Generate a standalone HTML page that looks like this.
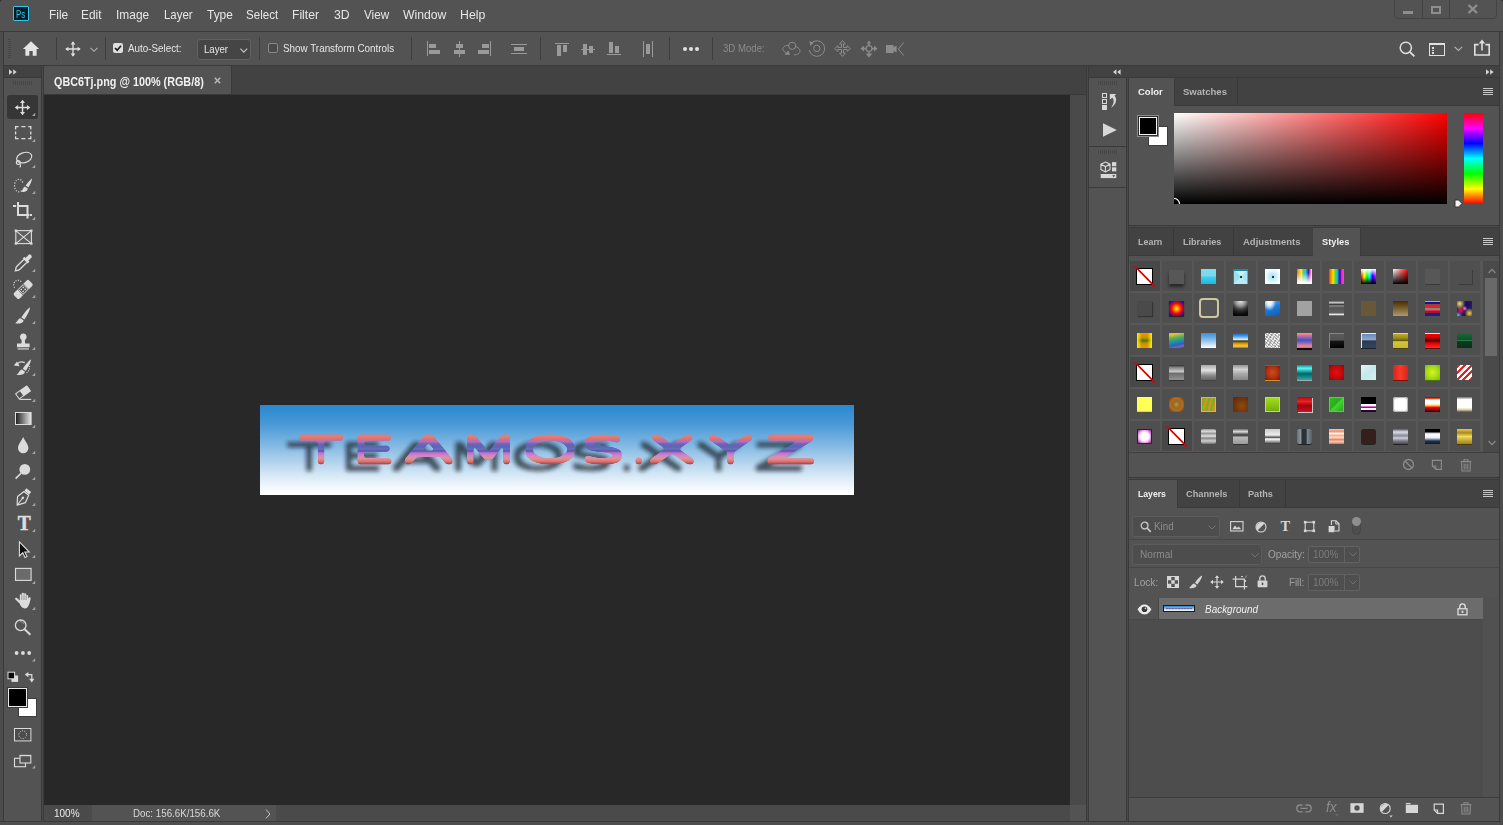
<!DOCTYPE html>
<html lang="en">
<head>
<meta charset="utf-8">
<title>QBC6Tj.png @ 100% (RGB/8)</title>
<style>
*{box-sizing:border-box;margin:0;padding:0}
html,body{width:1503px;height:825px;overflow:hidden;background:#535353}
body{position:relative;font-family:"Liberation Sans",sans-serif;font-size:11px;color:#dcdcdc;-webkit-font-smoothing:antialiased}
.abs,.abs *{position:absolute}
.abs{position:absolute}
.r{position:absolute}
.t{position:absolute;white-space:nowrap;line-height:1}
svg{position:absolute;overflow:visible}
/* === structural === */
#menubar{left:0;top:0;width:1503px;height:31px;background:#535353}
#optbar{left:4px;top:32px;width:1499px;height:33px;background:#535353}
/*SKELETON_CSS*/
</style>
</head>
<body>
<!-- ===== STRUCTURE BACKGROUNDS ===== -->
<div class="r" style="left:0;top:32px;width:4px;height:793px;background:#4c4c4c"></div>
<div class="r" style="left:0;top:31px;width:1503px;height:1px;background:#3a3a3a"></div>
<div class="r" style="left:3px;top:32px;width:1px;height:790px;background:#3a3a3a"></div>
<div class="r" style="left:4px;top:65px;width:1499px;height:1px;background:#3a3a3a"></div>
<div class="r" style="left:0;top:821px;width:1503px;height:1px;background:#3a3a3a"></div>
<div class="r" style="left:0;top:822px;width:1503px;height:3px;background:#4f4f4f"></div>

<!-- tools panel -->
<div class="r" id="toolhdr" style="left:4px;top:66px;width:37px;height:11px;background:#424242"></div>
<div class="r" style="left:4px;top:77px;width:37px;height:1px;background:#3a3a3a"></div>
<div class="r" style="left:41px;top:66px;width:3px;height:756px;background:linear-gradient(to right,#3a3a3a 0 1px,#484848 1px 2px,#3a3a3a 2px 3px)"></div>

<!-- document tab strip -->
<div class="r" style="left:44px;top:66px;width:1042px;height:29px;background:#424242"></div>
<div class="r" style="left:44px;top:66px;width:187px;height:29px;background:#535353"></div>
<div class="r" style="left:231px;top:66px;width:1px;height:28px;background:#3a3a3a"></div>
<div class="r" style="left:44px;top:94px;width:1042px;height:1px;background:#383838"></div>
<!-- canvas -->
<div class="r" id="canvas" style="left:44px;top:95px;width:1026px;height:710px;background:#282828"></div>
<div class="r" style="left:1070px;top:95px;width:16px;height:710px;background:#4a4a4a"></div>
<div class="r" style="left:44px;top:805px;width:1026px;height:16px;background:#4a4a4a"></div>
<div class="r" style="left:1086px;top:66px;width:3px;height:756px;background:linear-gradient(to right,#3a3a3a 0 1px,#484848 1px 2px,#3a3a3a 2px 3px)"></div>

<!-- right dock -->
<div class="r" style="left:1089px;top:66px;width:414px;height:11px;background:#424242"></div>
<div class="r" style="left:1089px;top:77px;width:414px;height:1px;background:#3a3a3a"></div>
<div class="r" style="left:1126px;top:78px;width:3px;height:744px;background:linear-gradient(to right,#3a3a3a 0 1px,#484848 1px 2px,#3a3a3a 2px 3px)"></div>
<!-- TOPBARS -->
<div class="r" style="left:13px;top:6px;width:16px;height:15px;background:#001d26;border:1px solid #31c5f0;border-radius:1px"></div>
<span class="t" style="left:16.28px;top:9px;font-size:11px;line-height:11px;color:#31c5f0;transform:scaleX(0.7167);transform-origin:0 0;">Ps</span>
<span class="t" style="left:48.55px;top:9px;font-size:12.6px;line-height:12.6px;color:#e6e6e6;transform:scaleX(0.9474);transform-origin:0 0;">File</span>
<span class="t" style="left:81.26px;top:9px;font-size:12.6px;line-height:12.6px;color:#e6e6e6;transform:scaleX(0.9429);transform-origin:0 0;">Edit</span>
<span class="t" style="left:116.25px;top:9px;font-size:12.6px;line-height:12.6px;color:#e6e6e6;transform:scaleX(0.9471);transform-origin:0 0;">Image</span>
<span class="t" style="left:163.59px;top:9px;font-size:12.6px;line-height:12.6px;color:#e6e6e6;transform:scaleX(0.9097);transform-origin:0 0;">Layer</span>
<span class="t" style="left:206.80px;top:9px;font-size:12.6px;line-height:12.6px;color:#e6e6e6;transform:scaleX(0.9481);transform-origin:0 0;">Type</span>
<span class="t" style="left:246.28px;top:9px;font-size:12.6px;line-height:12.6px;color:#e6e6e6;transform:scaleX(0.9176);transform-origin:0 0;">Select</span>
<span class="t" style="left:292.44px;top:9px;font-size:12.6px;line-height:12.6px;color:#e6e6e6;transform:scaleX(0.9630);transform-origin:0 0;">Filter</span>
<span class="t" style="left:333.80px;top:9px;font-size:12.6px;line-height:12.6px;color:#e6e6e6;transform:scaleX(0.9750);transform-origin:0 0;">3D</span>
<span class="t" style="left:364.00px;top:9px;font-size:12.6px;line-height:12.6px;color:#e6e6e6;transform:scaleX(0.9259);transform-origin:0 0;">View</span>
<span class="t" style="left:403.20px;top:9px;font-size:12.6px;line-height:12.6px;color:#e6e6e6;transform:scaleX(0.9689);transform-origin:0 0;">Window</span>
<span class="t" style="left:460.42px;top:9px;font-size:12.6px;line-height:12.6px;color:#e6e6e6;transform:scaleX(0.9760);transform-origin:0 0;">Help</span>
<div class="r" style="left:1394px;top:-2px;width:103px;height:21px;border:1px solid #434343;border-radius:0 0 4px 4px"></div>
<div class="r" style="left:1422px;top:0px;width:1px;height:18px;background:#434343;"></div>
<div class="r" style="left:1449px;top:0px;width:1px;height:18px;background:#434343;"></div>
<div class="r" style="left:1403px;top:11px;width:10px;height:3px;background:#8e8e8e;"></div>
<div class="r" style="left:1431px;top:6px;width:10px;height:8px;border:2px solid #8e8e8e"></div>
<svg style="left:1467px;top:4px" width="12" height="10" viewBox="0 0 12 10"><path d="M1.5 1 L10 9 M10 1 L1.5 9" stroke="#8e8e8e" stroke-width="2.4" fill="none"/></svg>
<svg style="left:0;top:0" width="1503" height="6" viewBox="0 0 1503 6"><path d="M0 0H3.2A3.2 3.2 0 0 0 0 3.2Z" fill="#2a2a2a"/><path d="M1503 0H1499.8A3.2 3.2 0 0 1 1503 3.2Z" fill="#2a2a2a"/></svg>
<div class="r" style="left:8px;top:39px;width:3px;height:20px;background:repeating-linear-gradient(to bottom,#464646 0 1px,transparent 1px 2px)"></div>
<svg style="left:22px;top:40px" width="18" height="17" viewBox="0 0 18 17"><path d="M9 1.3 L0.9 9 H3.4 V15.8 H7.3 V11 H10.7 V15.8 H14.6 V9 H17.1 Z" fill="#e4e4e4"/></svg>
<div class="r" style="left:56px;top:37px;width:1px;height:23px;background:#3e3e3e;"></div>
<div class="r" style="left:105px;top:37px;width:1px;height:23px;background:#3e3e3e;"></div>
<div class="r" style="left:259px;top:37px;width:1px;height:23px;background:#3e3e3e;"></div>
<div class="r" style="left:411px;top:37px;width:1px;height:23px;background:#3e3e3e;"></div>
<div class="r" style="left:540px;top:37px;width:1px;height:23px;background:#3e3e3e;"></div>
<div class="r" style="left:669px;top:37px;width:1px;height:23px;background:#3e3e3e;"></div>
<div class="r" style="left:712px;top:37px;width:1px;height:23px;background:#3e3e3e;"></div>
<svg style="left:64.5px;top:40.5px" width="16" height="16" viewBox="0 0 17 17"><path d="M8.5 1.6V15.4M1.6 8.5H15.4" stroke="#e0e0e0" stroke-width="1.4" fill="none"/><path d="M8.5 0.2L11 3.6H6ZM8.5 16.8L11 13.4H6ZM0.2 8.5L3.6 6V11ZM16.8 8.5L13.4 6V11Z" fill="#e0e0e0"/></svg>
<svg style="left:90px;top:47px" width="8" height="6" viewBox="0 0 8 6"><path d="M0.5 0.8L4 4.3L7.5 0.8" stroke="#b0b0b0" stroke-width="1.1" fill="none"/></svg>
<div class="r" style="left:113px;top:43px;width:10px;height:10px;background:#dedede;border-radius:2px"></div>
<svg style="left:113px;top:43px" width="10" height="10" viewBox="0 0 10 10"><path d="M2 5L4.2 7.2L8 2.8" stroke="#1e1e1e" stroke-width="1.7" fill="none"/></svg>
<span class="t" style="left:128.20px;top:44px;font-size:10.4px;line-height:10.4px;color:#e6e6e6;transform:scaleX(0.9464);transform-origin:0 0;">Auto-Select:</span>
<div class="r" style="left:197px;top:39px;width:54px;height:21px;background:#454545;border:1px solid #626262;border-radius:3px"></div>
<span class="t" style="left:204.29px;top:44px;font-size:10.6px;line-height:10.6px;color:#e8e8e8;transform:scaleX(0.9077);transform-origin:0 0;">Layer</span>
<svg style="left:240px;top:48px" width="8" height="6" viewBox="0 0 8 6"><path d="M0.4 0.6L3.8 4.1L7.2 0.6" stroke="#c8c8c8" stroke-width="1.1" fill="none"/></svg>
<div class="r" style="left:268px;top:43px;width:10px;height:10px;background:#4a4a4a;border:1px solid #8a8a8a;border-radius:2px"></div>
<span class="t" style="left:283.20px;top:44px;font-size:10.4px;line-height:10.4px;color:#e6e6e6;transform:scaleX(0.9487);transform-origin:0 0;">Show Transform Controls</span>
<div class="r" style="left:427px;top:41px;width:1px;height:15px;background:#9a9a9a;"></div>
<div class="r" style="left:429px;top:44px;width:7px;height:4px;background:#9a9a9a;"></div>
<div class="r" style="left:429px;top:50px;width:11px;height:4px;background:#9a9a9a;"></div>
<div class="r" style="left:459px;top:41px;width:1px;height:16px;background:#9a9a9a;"></div>
<div class="r" style="left:456px;top:44px;width:7px;height:4px;background:#9a9a9a;"></div>
<div class="r" style="left:454px;top:50px;width:11px;height:4px;background:#9a9a9a;"></div>
<div class="r" style="left:490px;top:41px;width:1px;height:15px;background:#9a9a9a;"></div>
<div class="r" style="left:482px;top:44px;width:7px;height:4px;background:#9a9a9a;"></div>
<div class="r" style="left:478px;top:50px;width:11px;height:4px;background:#9a9a9a;"></div>
<div class="r" style="left:511px;top:44px;width:16px;height:1px;background:#9a9a9a;"></div>
<div class="r" style="left:511px;top:53px;width:16px;height:1px;background:#9a9a9a;"></div>
<div class="r" style="left:514px;top:47px;width:10px;height:4px;background:#9a9a9a;"></div>
<div class="r" style="left:555px;top:43px;width:14px;height:1px;background:#9a9a9a;"></div>
<div class="r" style="left:557px;top:45px;width:4px;height:11px;background:#9a9a9a;"></div>
<div class="r" style="left:563px;top:45px;width:4px;height:7px;background:#9a9a9a;"></div>
<div class="r" style="left:581px;top:49px;width:14px;height:1px;background:#9a9a9a;"></div>
<div class="r" style="left:583px;top:44px;width:4px;height:11px;background:#9a9a9a;"></div>
<div class="r" style="left:589px;top:46px;width:4px;height:7px;background:#9a9a9a;"></div>
<div class="r" style="left:607px;top:54px;width:14px;height:1px;background:#9a9a9a;"></div>
<div class="r" style="left:609px;top:42px;width:4px;height:11px;background:#9a9a9a;"></div>
<div class="r" style="left:615px;top:46px;width:4px;height:7px;background:#9a9a9a;"></div>
<div class="r" style="left:643px;top:41px;width:1px;height:16px;background:#9a9a9a;"></div>
<div class="r" style="left:652px;top:41px;width:1px;height:16px;background:#9a9a9a;"></div>
<div class="r" style="left:646px;top:44px;width:4px;height:10px;background:#9a9a9a;"></div>
<div class="r" style="left:682.8px;top:46.8px;width:4.4px;height:4.4px;border-radius:50%;background:#e2e2e2"></div>
<div class="r" style="left:688.8px;top:46.8px;width:4.4px;height:4.4px;border-radius:50%;background:#e2e2e2"></div>
<div class="r" style="left:694.8px;top:46.8px;width:4.4px;height:4.4px;border-radius:50%;background:#e2e2e2"></div>
<span class="t" style="left:722.80px;top:44px;font-size:10.4px;line-height:10.4px;color:#8b8b8b;transform:scaleX(0.9244);transform-origin:0 0;">3D Mode:</span>
<svg style="left:781px;top:40px" width="21" height="17" viewBox="0 0 21 17"><circle cx="11.2" cy="5.8" r="3.6" fill="none" stroke="#8c8c8c" stroke-width="1"/><path d="M7.6 5.2C3 5.5 0.8 8 2.2 10.5L5 13.2M14.8 6.5C18.5 8 20.3 11 18 13.3C16.6 14.6 14.5 14.9 13 14.9" fill="none" stroke="#8c8c8c" stroke-width="1"/><path d="M3.6 14.8L9.2 14.8L7.2 10.6Z" fill="#8c8c8c"/></svg>
<svg style="left:808px;top:40px" width="18" height="18" viewBox="0 0 18 18"><circle cx="8.8" cy="8.4" r="3.2" fill="none" stroke="#8c8c8c" stroke-width="1"/><path d="M3.2 3.2A7.8 7.8 0 1 1 1.2 10" fill="none" stroke="#8c8c8c" stroke-width="1"/><path d="M1.4 1.2L5.8 2.6L2.4 6Z" fill="#8c8c8c"/></svg>
<svg style="left:834px;top:40px" width="17" height="17" viewBox="0 0 17 17"><path d="M8.5 0.6L11.4 3.9H9.5V7.5H13.1V5.6L16.4 8.5L13.1 11.4V9.5H9.5V13.1H11.4L8.5 16.4L5.6 13.1H7.5V9.5H3.9V11.4L0.6 8.5L3.9 5.6V7.5H7.5V3.9H5.6Z" fill="none" stroke="#8c8c8c" stroke-width="1"/></svg>
<svg style="left:860px;top:40px" width="18" height="18" viewBox="0 0 18 18"><circle cx="9" cy="8.6" r="2.9" fill="none" stroke="#8c8c8c" stroke-width="1.2"/><path d="M9 0.4L11.2 3.4H6.8ZM9 17.4L12.4 13.4H5.6ZM0.4 8.6L4 5.8V11.4ZM17.6 8.6L14 5.8V11.4Z" fill="#8c8c8c"/><path d="M9 3V5.6M9 11.6V13.6M3.6 8.6H6M12 8.6H14.4" stroke="#8c8c8c" stroke-width="1.6"/></svg>
<svg style="left:885px;top:41px" width="21" height="16" viewBox="0 0 21 16"><path d="M1 4H8.6V6.2L11.6 4.4V11.6L8.6 9.8V12H1Z" fill="#8c8c8c"/><path d="M18.8 1.4L13.4 8L18.8 14.6" fill="none" stroke="#8c8c8c" stroke-width="1"/></svg>
<svg style="left:1398px;top:40px" width="18" height="18" viewBox="0 0 18 18"><circle cx="7.8" cy="7.8" r="5.6" fill="none" stroke="#e0e0e0" stroke-width="1.5"/><path d="M11.8 11.8L16.4 16.4" stroke="#e0e0e0" stroke-width="1.8"/></svg>
<div class="r" style="left:1429px;top:43px;width:16px;height:13px;border:1px solid #e0e0e0;border-top-width:2px"></div>
<div class="r" style="left:1432px;top:47px;width:2px;height:1.6px;background:#e0e0e0;"></div>
<div class="r" style="left:1432px;top:49.6px;width:2px;height:1.6px;background:#e0e0e0;"></div>
<div class="r" style="left:1432px;top:52.2px;width:2px;height:1.6px;background:#e0e0e0;"></div>
<svg style="left:1454px;top:46px" width="9" height="6" viewBox="0 0 9 6"><path d="M0.6 0.8L4.4 4.4L8.2 0.8" stroke="#b4b4b4" stroke-width="1.1" fill="none"/></svg>
<svg style="left:1473px;top:39px" width="18" height="18" viewBox="0 0 18 18"><path d="M5.6 5.6H1.8V16H16.2V5.6H12.4" fill="none" stroke="#e0e0e0" stroke-width="1.6"/><path d="M9 2.6V11.6" stroke="#e0e0e0" stroke-width="1.6"/><path d="M9 0.6L12.2 4.4H5.8Z" fill="#e0e0e0"/></svg>
<div class="r" style="left:1499px;top:32px;width:1px;height:790px;background:#3a3a3a;"></div>
<div class="r" style="left:1500px;top:32px;width:3px;height:793px;background:#4c4c4c;"></div>
<svg style="left:9px;top:69px" width="8" height="6" viewBox="0 0 8 6"><path d="M0 0.3L3.4 3L0 5.7ZM4.2 0.3L7.6 3L4.2 5.7Z" fill="#d4d4d4"/></svg>
<svg style="left:1113px;top:69px" width="8" height="6" viewBox="0 0 8 6"><path d="M3.4 0.3L0 3L3.4 5.7ZM7.6 0.3L4.2 3L7.6 5.7Z" fill="#d4d4d4"/></svg>
<svg style="left:1486px;top:69px" width="8" height="6" viewBox="0 0 8 6"><path d="M0 0.3L3.4 3L0 5.7ZM4.2 0.3L7.6 3L4.2 5.7Z" fill="#d4d4d4"/></svg>

<!-- TOOLS -->
<div class="r" style="left:13px;top:81px;width:20px;height:4px;background:repeating-linear-gradient(to right,#464646 0 1px,transparent 1px 2px)"></div>
<div class="r" style="left:7px;top:95px;width:31px;height:24px;background:#363636;border-radius:3px"></div>
<svg style="left:0;top:0" width="44" height="825" viewBox="0 0 44 825">
<g transform="translate(22.5 107.5)"><path d="M0 -6.5V6.5M-6.5 0H6.5" stroke="#dcdcdc" stroke-width="1.5" fill="none"/><path d="M0 -7.8L2.5 -4.4H-2.5ZM0 7.8L2.5 4.4H-2.5ZM-7.8 0L-4.4 -2.5V2.5ZM7.8 0L4.4 -2.5V2.5Z" fill="#dcdcdc"/></g>
<path d="M35.2 112.8V116H32.0Z" fill="#a6a6a6"/>
<path d="M35.2 138.8V142H32.0Z" fill="#a6a6a6"/>
<path d="M35.2 164.8V168H32.0Z" fill="#a6a6a6"/>
<path d="M35.2 190.8V194H32.0Z" fill="#a6a6a6"/>
<path d="M35.2 216.8V220H32.0Z" fill="#a6a6a6"/>
<path d="M35.2 268.8V272H32.0Z" fill="#a6a6a6"/>
<path d="M35.2 294.8V298H32.0Z" fill="#a6a6a6"/>
<path d="M35.2 320.8V324H32.0Z" fill="#a6a6a6"/>
<path d="M35.2 346.8V350H32.0Z" fill="#a6a6a6"/>
<path d="M35.2 372.8V376H32.0Z" fill="#a6a6a6"/>
<path d="M35.2 398.8V402H32.0Z" fill="#a6a6a6"/>
<path d="M35.2 424.8V428H32.0Z" fill="#a6a6a6"/>
<path d="M35.2 450.8V454H32.0Z" fill="#a6a6a6"/>
<path d="M35.2 476.8V480H32.0Z" fill="#a6a6a6"/>
<path d="M35.2 502.8V506H32.0Z" fill="#a6a6a6"/>
<path d="M35.2 528.8V532H32.0Z" fill="#a6a6a6"/>
<path d="M35.2 554.8V558H32.0Z" fill="#a6a6a6"/>
<path d="M35.2 580.8V584H32.0Z" fill="#a6a6a6"/>
<path d="M35.2 606.8V610H32.0Z" fill="#a6a6a6"/>
<path d="M35.2 658.3V661.5H32.0Z" fill="#a6a6a6"/><path d="M35.2 765.3V768.5H32.0Z" fill="#a6a6a6"/>
<path d="M15.6 129.4V126.6H18.6M21.4 126.6H25.4M28.2 126.6H30.8V129.4M30.8 131.6V134.4M30.8 136.2V138.6H28.2M25.4 138.6H21.4M18.6 138.6H15.6V136.2M15.6 134.4V131.6" stroke="#dcdcdc" stroke-width="1.3" fill="none"/>
<g fill="none" stroke="#dcdcdc" stroke-width="1.2"><ellipse cx="24.2" cy="157.6" rx="7.8" ry="5" transform="rotate(-18 24.2 157.6)"/><circle cx="18.3" cy="162.6" r="1.9"/><path d="M19.8 163.8C20.8 165 20.6 166.6 19.6 167.4"/></g>
<path d="M21.6 190.6A4.4 6.3 0 1 1 22.8 182.6" fill="none" stroke="#dcdcdc" stroke-width="1.2" stroke-dasharray="1.1 1.5"/><path d="M32.2 178.2C31.6 181.6 30 185 28.4 187.6L25.6 185.6C27.4 183 29.6 180.2 32.2 178.2Z M24.8 186.4L27.8 188.6C27.6 191.4 24.4 192.6 20.6 191.6C23 190.6 22.8 187.4 24.8 186.4Z" fill="#dcdcdc"/>
<path d="M13 206H27.5V218.6M18 202V215H29M29.6 215H32" stroke="#dcdcdc" stroke-width="2" fill="none"/><rect x="16.2" y="205" width="0.9" height="2" fill="#535353"/>
<rect x="15.8" y="230.6" width="15.6" height="13" fill="#5c5c5c" stroke="#dcdcdc" stroke-width="1.1"/><path d="M15.8 230.6L31.4 243.6M31.4 230.6L15.8 243.6" stroke="#dcdcdc" stroke-width="1.1"/><rect x="14.700000000000001" y="229.5" width="2.2" height="2.2" fill="#dcdcdc"/><rect x="30.299999999999997" y="229.5" width="2.2" height="2.2" fill="#dcdcdc"/><rect x="14.700000000000001" y="242.5" width="2.2" height="2.2" fill="#dcdcdc"/><rect x="30.299999999999997" y="242.5" width="2.2" height="2.2" fill="#dcdcdc"/>
<g transform="translate(22.8 263.4) rotate(45)"><path d="M-2 -10.4C-2 -12 2 -12 2 -10.4V-5.8H3.6V-3.4H-3.6V-5.8H-2Z" fill="#dcdcdc"/><path d="M-2.1 -3.4V6.2C-2.1 8.6 -0.6 9 0 10.4C0.6 9 2.1 8.6 2.1 6.2V-3.4" fill="none" stroke="#dcdcdc" stroke-width="1.3"/></g>
<path d="M14.6 287.6A4.4 4.4 0 1 1 21.6 282" fill="none" stroke="#dcdcdc" stroke-width="1.1" stroke-dasharray="1.1 1.3"/><g transform="translate(23.2 289.4) rotate(-45)"><rect x="-10.6" y="-3.9" width="21.2" height="7.8" rx="1.8" fill="#dcdcdc"/><rect x="-4.2" y="-3.9" width="8.4" height="7.8" fill="#535353"/><rect x="-3.4" y="-3.4" width="6.8" height="6.8" rx="0.8" fill="#505050" stroke="#dcdcdc" stroke-width="0.9"/><circle cx="-1.4" cy="-1.4" r="0.85" fill="#dcdcdc"/><circle cx="-1.4" cy="1.4" r="0.85" fill="#dcdcdc"/><circle cx="1.4" cy="-1.4" r="0.85" fill="#dcdcdc"/><circle cx="1.4" cy="1.4" r="0.85" fill="#dcdcdc"/></g>
<path d="M29.8 307.6C30.4 309.6 27.4 315 24.4 319.6L21.4 317.4C24.2 313.4 27.6 308.8 29.8 307.6Z M20.6 318.2L23.6 320.4C23.2 323.2 19 324 15 323.2C17.6 322 17.8 318.8 20.6 318.2Z" fill="#dcdcdc"/>
<path d="M23.3 333.6A3.4 3.4 0 0 1 25.2 339.8C24.6 341 25 342.6 25.4 343.6H29.6V347.2H17V343.6H21.2C21.6 342.6 22 341 21.4 339.8A3.4 3.4 0 0 1 23.3 333.6Z" fill="#dcdcdc"/><rect x="17.6" y="348.4" width="11.4" height="1.1" fill="#dcdcdc"/>
<path d="M30.8 359.6C31.4 361.6 28.6 366.6 25.8 371L22.8 368.8C25.4 365 28.6 360.8 30.8 359.6Z M22 369.6L25 371.8C24.6 374.6 20.4 375.6 16.4 374.8C19 373.6 19.2 370.2 22 369.6Z" fill="#dcdcdc"/><path d="M24.8 362.6C22.2 361.6 19.4 361.8 17.6 363.4" stroke="#dcdcdc" stroke-width="1.3" fill="none"/><path d="M13.8 365.4L19.6 366.2L17 361.4Z" fill="#dcdcdc"/><path d="M29.6 366C29.8 369 28.6 371.6 26.4 373.2" stroke="#dcdcdc" stroke-width="1.1" stroke-dasharray="1 1.3" fill="none"/>
<g transform="translate(23 392.4) rotate(-35)"><rect x="-1.2" y="-3.6" width="8.6" height="7.2" rx="0.6" fill="#dcdcdc"/><rect x="-6.8" y="-3.1" width="5.6" height="6.2" fill="none" stroke="#dcdcdc" stroke-width="1"/></g><path d="M19.4 399.4H31.2" stroke="#dcdcdc" stroke-width="1.1"/>
<defs><linearGradient id="tg"><stop offset="0" stop-color="#1c1c1c"/><stop offset="1" stop-color="#e6e6e6"/></linearGradient></defs><rect x="15.5" y="412.5" width="15.6" height="12" fill="url(#tg)" stroke="#dcdcdc" stroke-width="1"/>
<path d="M23.2 437C24.6 440.6 28.4 444.2 28.4 448A5.2 5.2 0 0 1 18 448C18 444.2 21.8 440.6 23.2 437Z" fill="#dcdcdc"/>
<circle cx="24.8" cy="469.4" r="5.4" fill="#dcdcdc"/><path d="M21 473.2L15.6 478.6" stroke="#dcdcdc" stroke-width="1.6"/>
<g transform="translate(23 497.6) rotate(38)"><rect x="-3" y="-9.4" width="6" height="3.2" fill="#dcdcdc"/><path d="M-3 -5.4H3L5 2.4L0 9.6L-5 2.4Z" fill="none" stroke="#dcdcdc" stroke-width="1.2" stroke-linejoin="round"/><path d="M0 9V1" stroke="#dcdcdc" stroke-width="1"/><circle cx="0" cy="0.2" r="1.3" fill="#dcdcdc"/></g>
<text x="24.2" y="530" text-anchor="middle" font-family="Liberation Serif,serif" font-weight="bold" font-size="20.5" fill="#dcdcdc" stroke="#dcdcdc" stroke-width="0.5" transform="translate(24.2 0) scale(0.95 1) translate(-24.2 0)">T</text>
<path d="M19.4 541.8V556L22.8 552.8L25 557.6L27 556.6L24.8 552H29.2Z" fill="#0c0c0c" stroke="#dcdcdc" stroke-width="1.1" stroke-linejoin="miter"/>
<rect x="15.5" y="568.4" width="15.6" height="12" fill="#6b6b6b" stroke="#dcdcdc" stroke-width="1.1"/>
<path d="M19.6 603.6L15.2 599.2C14.6 598 16 597.2 17 598L19.8 600.6V595.4C19.8 594 21.6 594 21.8 595.4V593.8C21.8 592.4 23.8 592.4 24 593.8V594.4C24 593 26 593 26.2 594.4V595.8C26.2 594.6 28 594.6 28.2 595.8V598.4C29.2 596.6 31 597.2 30.6 598.8C30 602 29.4 604.8 27.6 607.2C25.4 609.6 21.4 608.8 19.6 603.6Z" fill="#dcdcdc"/><path d="M21.8 595.4V600M24 594.4V600M26.2 595.8V600" stroke="#535353" stroke-width="0.5"/>
<circle cx="20.7" cy="625.3" r="5.3" fill="none" stroke="#dcdcdc" stroke-width="1.3"/><path d="M24.6 629.2L30.4 634.8" stroke="#dcdcdc" stroke-width="1.9"/><path d="M20 621.6C21.8 621.4 23.4 622.4 24 624" stroke="#a8a8a8" stroke-width="0.9" fill="none"/>
<circle cx="16.6" cy="653" r="1.9" fill="#dcdcdc"/><circle cx="22.9" cy="653" r="1.9" fill="#dcdcdc"/><circle cx="29.2" cy="653" r="1.9" fill="#dcdcdc"/>
<rect x="11.5" y="675.5" width="6.6" height="6.4" fill="#dcdcdc"/><rect x="8" y="672.2" width="6.6" height="6.6" fill="#0a0a0a" stroke="#dcdcdc" stroke-width="1"/>
<path d="M27.6 674.6H31.8V680" stroke="#dcdcdc" stroke-width="1.2" fill="none"/><path d="M24.8 674.6L28.4 672V677.2ZM31.8 682.4L29.2 678.8H34.4Z" fill="#dcdcdc"/>
<rect x="14.5" y="728.5" width="16.4" height="12.4" fill="#4c4c4c" stroke="#dcdcdc" stroke-width="1"/><circle cx="22.7" cy="734.7" r="3.9" fill="none" stroke="#dcdcdc" stroke-width="1" stroke-dasharray="1 1.45"/>
<rect x="14.5" y="758.3" width="11" height="8.4" fill="#535353" stroke="#dcdcdc" stroke-width="1.1"/><rect x="20" y="755.4" width="10.8" height="7.6" fill="#535353" stroke="#dcdcdc" stroke-width="1.1"/><rect x="20" y="755" width="10.8" height="1.2" fill="#dcdcdc"/>
</svg>
<div class="r" style="left:17.5px;top:697.5px;width:19.3px;height:19.3px;background:#fff;border:1px solid #3c3c3c"></div>
<div class="r" style="left:7.5px;top:687.5px;width:19px;height:19px;background:#000;border:1px solid #e8e8e8;outline:1px solid #3c3c3c;outline-offset:0"></div>

<!-- DOC -->
<span class="t" style="left:54.20px;top:76px;font-size:12px;line-height:12px;color:#f0f0f0;font-weight:bold;transform:scaleX(0.9000);transform-origin:0 0;">QBC6Tj.png @ 100% (RGB/8)</span>
<svg style="left:214px;top:77px" width="7" height="7" viewBox="0 0 7 7"><path d="M0.8 0.8L6.2 6.2M6.2 0.8L0.8 6.2" stroke="#b8b8b8" stroke-width="1.5" fill="none"/></svg>
<div class="r" style="left:260px;top:405px;width:594px;height:90px;background:linear-gradient(to bottom,#2a87d0 0%,#4a9ad7 22%,#8fc0e6 50%,#cfe4f4 75%,#ffffff 97%)"></div>
<svg style="left:260px;top:405px" width="594" height="90" viewBox="260 405 594 90">
<defs>
<linearGradient id="tx" gradientUnits="userSpaceOnUse" x1="0" y1="434" x2="0" y2="464">
<stop offset="0" stop-color="#f4706a"/><stop offset="0.07" stop-color="#ec7c74"/><stop offset="0.17" stop-color="#d87470"/><stop offset="0.22" stop-color="#c070a8"/><stop offset="0.27" stop-color="#b468c0"/><stop offset="0.33" stop-color="#6c64b8"/><stop offset="0.43" stop-color="#5a66b4"/><stop offset="0.5" stop-color="#6870bc"/><stop offset="0.57" stop-color="#5458a8"/><stop offset="0.62" stop-color="#b46cc8"/><stop offset="0.7" stop-color="#d080d4"/><stop offset="0.77" stop-color="#d890a8"/><stop offset="0.83" stop-color="#e09090"/><stop offset="0.92" stop-color="#dc7070"/><stop offset="1" stop-color="#a84444"/>
</linearGradient>
<filter id="thick" filterUnits="userSpaceOnUse" x="260" y="405" width="594" height="90">
<feMorphology operator="dilate" radius="1.05 1.5"/><feGaussianBlur stdDeviation="1.4"/>
<feComponentTransfer><feFuncA type="linear" slope="7" intercept="-2.2"/></feComponentTransfer>
</filter>
<filter id="shad" filterUnits="userSpaceOnUse" x="260" y="405" width="594" height="90">
<feMorphology operator="dilate" radius="1.1 1.7"/><feGaussianBlur stdDeviation="2.2"/>
<feComponentTransfer><feFuncA type="linear" slope="1.3" intercept="0"/></feComponentTransfer>
</filter>
<mask id="tm" maskUnits="userSpaceOnUse" x="260" y="405" width="594" height="90">
<g filter="url(#thick)"><text transform="scale(2.2 1)" x="135.68 159.09 183.41 207.50 236.82 263.41 285.00 293.86 321.82 347.95" y="461.6" font-family="DejaVu Sans,sans-serif" font-weight="200" font-size="33.6" fill="#fff">TEAMOS.XYZ</text></g>
</mask>
</defs>
<g filter="url(#shad)"><text transform="scale(2.2 1)" x="130.23 153.64 177.95 202.05 231.36 257.95 279.55 288.41 316.36 342.50" y="468.6" font-family="DejaVu Sans,sans-serif" font-weight="200" font-size="33.6" fill="#141c26" fill-opacity="0.56">TEAMOS.XYZ</text></g>
<rect x="260" y="405" width="594" height="90" fill="url(#tx)" mask="url(#tm)"/>
</svg>
<div class="r" style="left:92px;top:805px;width:184px;height:16px;background:#535353;"></div>
<div class="r" style="left:1070px;top:805px;width:16px;height:16px;background:#535353;"></div>
<span class="t" style="left:54.44px;top:809px;font-size:10.4px;line-height:10.4px;color:#ececec;transform:scaleX(0.9600);transform-origin:0 0;">100%</span>
<span class="t" style="left:132.66px;top:809px;font-size:10.4px;line-height:10.4px;color:#d8d8d8;transform:scaleX(0.9391);transform-origin:0 0;">Doc: 156.6K/156.6K</span>
<svg style="left:265px;top:809px" width="6" height="10" viewBox="0 0 6 10"><path d="M1 0.6L5 5L1 9.4" stroke="#c4c4c4" stroke-width="1" fill="none"/></svg>

<!-- ICONCOL -->
<div class="r" style="left:1098px;top:81px;width:20px;height:4px;background:repeating-linear-gradient(to right,#464646 0 1px,transparent 1px 2px)"></div>
<div class="r" style="left:1098px;top:150px;width:20px;height:4px;background:repeating-linear-gradient(to right,#464646 0 1px,transparent 1px 2px)"></div>
<div class="r" style="left:1089px;top:146px;width:37px;height:1px;background:#3a3a3a;"></div>
<div class="r" style="left:1089px;top:187px;width:37px;height:1px;background:#3a3a3a;"></div>
<svg style="left:1089px;top:78px" width="38" height="120" viewBox="1089 78 38 120">
<rect x="1102.5" y="93.5" width="4" height="4" fill="none" stroke="#d8d8d8" stroke-width="1"/><rect x="1102.5" y="99.5" width="4" height="4" fill="none" stroke="#d8d8d8" stroke-width="1"/><rect x="1102" y="105" width="5" height="5" fill="#d8d8d8"/>
<path d="M1109.9 94H1116.2L1114.5 95.8C1117.2 98.6 1116.8 104.2 1110.8 108C1114.2 103.8 1114.4 99.8 1112.3 97.8L1109.9 99.6Z" fill="#d8d8d8"/>
<path d="M1103 123.2L1116.8 130L1103 136.8Z" fill="#d8d8d8"/>
<path d="M1105.4 162L1110 164.2V169.6L1105.4 172L1100.9 169.6V164.2Z M1100.9 164.2L1105.4 166.6L1110 164.2M1105.4 166.6V172" fill="none" stroke="#d8d8d8" stroke-width="1.1"/><rect x="1112" y="162.1" width="4.3" height="4.1" fill="#d8d8d8"/><rect x="1112" y="167.3" width="4.3" height="4.1" fill="#d8d8d8"/><rect x="1100.7" y="174" width="15.6" height="4.1" fill="#d8d8d8"/><path d="M1112.2 175.2H1115.2L1113.7 177.2Z" fill="#444"/>
</svg>

<!-- COLORPANEL -->
<div class="r" style="left:1129px;top:78px;width:370px;height:27px;background:#424242;"></div>
<div class="r" style="left:1129px;top:105px;width:370px;height:1px;background:#3a3a3a;"></div>
<div class="r" style="left:1129px;top:78px;width:45px;height:28px;background:#535353;"></div>
<div class="r" style="left:1174px;top:78px;width:1px;height:27px;background:#3a3a3a;"></div>
<div class="r" style="left:1237px;top:78px;width:1px;height:27px;background:#383838;"></div>
<span class="t" style="left:1137.90px;top:87px;font-size:9.9px;line-height:9.9px;color:#f2f2f2;font-weight:bold;transform:scaleX(0.9615);transform-origin:0 0;">Color</span>
<span class="t" style="left:1183.00px;top:87px;font-size:9.9px;line-height:9.9px;color:#b4b4b4;font-weight:bold;transform:scaleX(0.9644);transform-origin:0 0;">Swatches</span>
<div class="r" style="left:1483px;top:88px;width:10px;height:1px;background:#c8c8c8;"></div>
<div class="r" style="left:1483px;top:90px;width:10px;height:1px;background:#c8c8c8;"></div>
<div class="r" style="left:1483px;top:92px;width:10px;height:1px;background:#c8c8c8;"></div>
<div class="r" style="left:1483px;top:94px;width:10px;height:1px;background:#c8c8c8;"></div>
<div class="r" style="left:1129px;top:225px;width:370px;height:1px;background:#3a3a3a;"></div>
<div class="r" style="left:1129px;top:226px;width:370px;height:1px;background:#4a4a4a;"></div>
<div class="r" style="left:1129px;top:227px;width:370px;height:1px;background:#3a3a3a;"></div>
<div class="r" style="left:1148px;top:126px;width:19.5px;height:19.5px;background:#fff;border:1px solid #3c3c3c"></div>
<div class="r" style="left:1137px;top:115px;width:22px;height:22px;background:#535353;border:1px solid #8c8c8c"></div>
<div class="r" style="left:1139px;top:117px;width:18px;height:18px;background:#000;border:1px solid #f4f4f4;outline:1px solid #2e2e2e"></div>
<div class="r" style="left:1174px;top:113px;width:273px;height:91px;background:linear-gradient(to bottom,rgba(0,0,0,0),#000),linear-gradient(to right,#fff,#f00)"></div>
<svg style="left:1174px;top:113px;overflow:hidden" width="273" height="91" viewBox="0 0 273 91"><circle cx="0" cy="91" r="5.5" fill="none" stroke="#fff" stroke-width="1.2" clip-path="inset(0)"/></svg>
<div class="r" style="left:1464px;top:113px;width:19px;height:91px;background:linear-gradient(to bottom,#f00 0%,#f0f 16.7%,#00f 33.3%,#0ff 50%,#0f0 66.7%,#ff0 83.3%,#f00 100%)"></div>
<svg style="left:1454px;top:199px" width="9" height="9" viewBox="0 0 9 9"><path d="M1 1H4.6L8 4.5L4.6 8H1Z" fill="#f2f2f2" stroke="#2a2a2a" stroke-width="0.9"/></svg>

<!-- STYLESPANEL -->
<div class="r" style="left:1129px;top:228px;width:370px;height:27px;background:#424242;"></div>
<div class="r" style="left:1129px;top:255px;width:370px;height:1px;background:#3a3a3a;"></div>
<div class="r" style="left:1173px;top:228px;width:1px;height:27px;background:#383838;"></div>
<div class="r" style="left:1233px;top:228px;width:1px;height:27px;background:#383838;"></div>
<div class="r" style="left:1313px;top:228px;width:1px;height:27px;background:#383838;"></div>
<div class="r" style="left:1313px;top:228px;width:47px;height:28px;background:#535353;"></div>
<div class="r" style="left:1360px;top:228px;width:1px;height:27px;background:#3a3a3a;"></div>
<span class="t" style="left:1138.30px;top:237px;font-size:9.9px;line-height:9.9px;color:#b4b4b4;font-weight:bold;transform:scaleX(0.9037);transform-origin:0 0;">Learn</span>
<span class="t" style="left:1183.40px;top:237px;font-size:9.9px;line-height:9.9px;color:#b4b4b4;font-weight:bold;transform:scaleX(0.9190);transform-origin:0 0;">Libraries</span>
<span class="t" style="left:1243.30px;top:237px;font-size:9.9px;line-height:9.9px;color:#b4b4b4;font-weight:bold;transform:scaleX(0.9600);transform-origin:0 0;">Adjustments</span>
<span class="t" style="left:1322.20px;top:237px;font-size:9.9px;line-height:9.9px;color:#f2f2f2;font-weight:bold;transform:scaleX(0.9379);transform-origin:0 0;">Styles</span>
<div class="r" style="left:1483px;top:238px;width:10px;height:1px;background:#c8c8c8;"></div>
<div class="r" style="left:1483px;top:240px;width:10px;height:1px;background:#c8c8c8;"></div>
<div class="r" style="left:1483px;top:242px;width:10px;height:1px;background:#c8c8c8;"></div>
<div class="r" style="left:1483px;top:244px;width:10px;height:1px;background:#c8c8c8;"></div>
<div class="r" style="left:1129px;top:257px;width:354px;height:195px;background:#575757"></div>
<div class="r" style="left:1129px;top:257px;width:354px;height:4px;background:#535353"></div>
<div class="r" style="left:1130px;top:261px;width:30px;height:30px;background:#484848"><div class="r" style="left:6px;top:7px;width:17px;height:17px;background:#fff;border:1px solid #000"></div><svg style="left:0;top:0" width="30" height="30" viewBox="0 0 30 30"><path d="M4.8 5.2L24.9 25.7" stroke="#dc0000" stroke-width="1.7"/></svg></div>
<div class="r" style="left:1162px;top:261px;width:30px;height:30px;background:#4f4f4f"><div class="r" style="left:7px;top:8px;width:15px;height:15px;background:#575757;box-shadow:0 3px 3px rgba(0,0,0,.5);height:14px;margin-top:1px"></div></div>
<div class="r" style="left:1194px;top:261px;width:30px;height:30px;background:#4f4f4f"><div class="r" style="left:7px;top:8px;width:15px;height:15px;background:linear-gradient(#80dcee 0,#78d8ec 49%,#4ccbea 51%,#12bce8 100%);"></div></div>
<div class="r" style="left:1226px;top:261px;width:30px;height:30px;background:#4f4f4f"><div class="r" style="left:7px;top:8px;width:15px;height:15px;background:conic-gradient(from 45deg,#a8e4f5 0 90deg,#b8ecf8 90deg 180deg,#9cdef2 180deg 270deg,#c4f0fa 270deg);box-shadow:inset 1px 2px 0 #1a86a8,inset -1px 0 0 #48b4d4;"><div class="r" style="left:6.5px;top:6.5px;width:2px;height:2px;background:#3a2e2e"></div></div></div>
<div class="r" style="left:1258px;top:261px;width:30px;height:30px;background:#4f4f4f"><div class="r" style="left:7px;top:8px;width:15px;height:15px;background:radial-gradient(circle,#9fe0f6 0,#d8f4fc 45%,#fff 80%);"><div class="r" style="left:6.5px;top:6.5px;width:2px;height:2px;background:#3a2e2e"></div></div></div>
<div class="r" style="left:1290px;top:261px;width:30px;height:30px;background:#4f4f4f"><div class="r" style="left:7px;top:8px;width:15px;height:15px;background:linear-gradient(to bottom,rgba(255,255,255,0) 25%,#fff 92%),linear-gradient(to right,#fa5a5a,#ffb020 14%,#f0f040 28%,#50d060 42%,#30c8d0 56%,#4060f0 68%,#30208a 76%,#f050d0 88%,#fff 100%);"></div></div>
<div class="r" style="left:1322px;top:261px;width:30px;height:30px;background:#4f4f4f"><div class="r" style="left:7px;top:8px;width:15px;height:15px;background:linear-gradient(to right,#ff2a1a 0,#ff8a00 12%,#ffe600 27%,#58d838 42%,#10c8c8 55%,#2838d8 66%,#2a1088 74%,#f020c8 84%,#ff40d8 100%);"></div></div>
<div class="r" style="left:1354px;top:261px;width:30px;height:30px;background:#4f4f4f"><div class="r" style="left:7px;top:8px;width:15px;height:15px;background:linear-gradient(to bottom,#fff 0,rgba(255,255,255,0) 48%,rgba(0,0,0,0) 52%,#000 100%),linear-gradient(to right,#f00,#ff0 22%,#0f0 40%,#0ff 58%,#00f 76%,#f0f 100%);"></div></div>
<div class="r" style="left:1386px;top:261px;width:30px;height:30px;background:#4f4f4f"><div class="r" style="left:7px;top:8px;width:15px;height:15px;background:linear-gradient(to bottom,rgba(0,0,0,0),#000),linear-gradient(to right,#fff,#f00);"></div></div>
<div class="r" style="left:1418px;top:261px;width:30px;height:30px;background:#4f4f4f"><div class="r" style="left:7px;top:8px;width:15px;height:15px;background:#575757;box-shadow:0 1px 0 #3a3a3a"></div></div>
<div class="r" style="left:1450px;top:261px;width:30px;height:30px;background:#4f4f4f"><div class="r" style="left:7px;top:8px;width:15px;height:15px;background:transparent;box-shadow:1px 1px 0 #3c3c3c"></div></div>
<div class="r" style="left:1130px;top:293px;width:30px;height:30px;background:#4f4f4f"><div class="r" style="left:7px;top:8px;width:15px;height:15px;background:#4a4a4a;box-shadow:1px 1px 1px rgba(0,0,0,.35)"></div></div>
<div class="r" style="left:1162px;top:293px;width:30px;height:30px;background:#4f4f4f"><div class="r" style="left:7px;top:8px;width:15px;height:15px;background:radial-gradient(circle,#ffee00 0,#ff9000 22%,#ff1000 45%,#b00838 62%,#2010b0 82%,#1a0ea8 100%);box-shadow:0 1px 1px rgba(0,0,0,.5)"></div></div>
<div class="r" style="left:1194px;top:293px;width:30px;height:30px;background:#4f4f4f"><div class="r" style="left:7px;top:8px;width:15px;height:15px;background:#565656;left:5px;top:5px;width:20px;height:20px;border:2px solid rgba(220,216,172,.88);border-radius:4px"></div></div>
<div class="r" style="left:1226px;top:293px;width:30px;height:30px;background:#4f4f4f"><div class="r" style="left:7px;top:8px;width:15px;height:15px;background:radial-gradient(circle at 50% 0%,#e8e8e8 0,#9a9a9a 28%,#3a3a3a 52%,#111 75%,#000 100%);border-radius:1px"></div></div>
<div class="r" style="left:1258px;top:293px;width:30px;height:30px;background:#4f4f4f"><div class="r" style="left:7px;top:8px;width:15px;height:15px;background:radial-gradient(ellipse at 30% 5%,#fff 0,#e0f0fc 18%,rgba(255,255,255,0) 45%),linear-gradient(160deg,#5aa8e8 0,#1e7ad4 45%,#0f5cb4 100%);border-radius:1px"></div></div>
<div class="r" style="left:1290px;top:293px;width:30px;height:30px;background:#4f4f4f"><div class="r" style="left:7px;top:8px;width:15px;height:15px;background:#a2a2a2;"></div></div>
<div class="r" style="left:1322px;top:293px;width:30px;height:30px;background:#4f4f4f"><div class="r" style="left:7px;top:8px;width:15px;height:15px;background:linear-gradient(to bottom,#555 0,#d8d8d8 12%,#333 22%,#888 32%,#565656 45%,#606060 78%,#e8e8e8 90%,#444 100%);"></div></div>
<div class="r" style="left:1354px;top:293px;width:30px;height:30px;background:#4f4f4f"><div class="r" style="left:7px;top:8px;width:15px;height:15px;background:#675838;"></div></div>
<div class="r" style="left:1386px;top:293px;width:30px;height:30px;background:#4f4f4f"><div class="r" style="left:7px;top:8px;width:15px;height:15px;background:linear-gradient(#4a2c00,#7a6030 50%,#aa9a72);"></div></div>
<div class="r" style="left:1418px;top:293px;width:30px;height:30px;background:#4f4f4f"><div class="r" style="left:7px;top:8px;width:15px;height:15px;background:linear-gradient(to bottom,#c890e0 0 7%,#1c1098 7% 22%,#8a4a34 22% 33%,#ea1c3c 33% 47%,#8c8a64 47% 58%,#e0285a 58% 70%,#a41a1a 70% 83%,#1a1aa4 83% 100%);"></div></div>
<div class="r" style="left:1450px;top:293px;width:30px;height:30px;background:#4f4f4f"><div class="r" style="left:7px;top:8px;width:15px;height:15px;background:radial-gradient(circle at 18% 18%,#f0e840 0,rgba(200,190,40,0) 32%),radial-gradient(circle at 70% 22%,#10104a 0,rgba(20,20,120,0) 36%),radial-gradient(circle at 25% 62%,#f01838 0,rgba(240,40,60,0) 30%),radial-gradient(circle at 82% 82%,#f0dc20 0,rgba(230,200,30,0) 30%),radial-gradient(circle at 52% 48%,#fcb0c8 0,rgba(240,160,190,0) 24%),radial-gradient(circle at 8% 95%,#40d0e0 0,rgba(60,200,220,0) 18%),radial-gradient(circle at 60% 85%,#0a0a20 0,rgba(10,10,30,0) 28%),#3a1478;"></div></div>
<div class="r" style="left:1130px;top:325px;width:30px;height:30px;background:#4f4f4f"><div class="r" style="left:7px;top:8px;width:15px;height:15px;background:linear-gradient(to right,#ffee00 0,rgba(255,238,0,0) 32%,rgba(255,238,0,0) 68%,#ffee00 100%),linear-gradient(to bottom,#ff8c00 0,#c09800 28%,#6e7000 50%,#c09800 72%,#ff8c00 100%);"></div></div>
<div class="r" style="left:1162px;top:325px;width:30px;height:30px;background:#4f4f4f"><div class="r" style="left:7px;top:8px;width:15px;height:15px;background:linear-gradient(168deg,#f0a040 0,#e8c040 12%,#58b050 34%,#2094a0 54%,#3060c0 74%,#7068c8 88%,#3a40a0 100%);"></div></div>
<div class="r" style="left:1194px;top:325px;width:30px;height:30px;background:#4f4f4f"><div class="r" style="left:7px;top:8px;width:15px;height:15px;background:linear-gradient(#3a8fd8,#8fc0ea 50%,#fff);"></div></div>
<div class="r" style="left:1226px;top:325px;width:30px;height:30px;background:#4f4f4f"><div class="r" style="left:7px;top:8px;width:15px;height:15px;background:linear-gradient(to bottom,#1058b8 0,#4aa0e8 22%,#e8f4fc 46%,#2a2418 52%,#7a4a00 57%,#e8a000 72%,#f4c848 88%,#b07000 100%);"></div></div>
<div class="r" style="left:1258px;top:325px;width:30px;height:30px;background:#4f4f4f"><div class="r" style="left:7px;top:8px;width:15px;height:15px;background:repeating-linear-gradient(37deg,rgba(80,80,80,.35) 0 1px,rgba(255,255,255,0) 1px 2.3px),repeating-linear-gradient(124deg,rgba(60,60,60,.3) 0 1px,rgba(255,255,255,0) 1px 3.1px),#ececec;"></div></div>
<div class="r" style="left:1290px;top:325px;width:30px;height:30px;background:#4f4f4f"><div class="r" style="left:7px;top:8px;width:15px;height:15px;background:linear-gradient(to bottom,#f09898 0,#e07484 14%,#9a64c0 28%,#4454b4 48%,#7462c4 62%,#d472a8 78%,#e88888 88%,#d07070 100%);box-shadow:0 2px 0 #0a0a0a"></div></div>
<div class="r" style="left:1322px;top:325px;width:30px;height:30px;background:#4f4f4f"><div class="r" style="left:7px;top:8px;width:15px;height:15px;background:linear-gradient(to bottom,#5a5a5a 0,#545454 48%,#161616 53%,#000 100%);box-shadow:inset 1px 1px 0 #6a88b8"></div></div>
<div class="r" style="left:1354px;top:325px;width:30px;height:30px;background:#4f4f4f"><div class="r" style="left:7px;top:8px;width:15px;height:15px;background:linear-gradient(to bottom,#6684ae 0,#8eaad2 46%,#2a3a4e 52%,#34465c 100%);box-shadow:inset 1px 1px 0 #e4ecf4,0 1px 0 #1a2430"></div></div>
<div class="r" style="left:1386px;top:325px;width:30px;height:30px;background:#4f4f4f"><div class="r" style="left:7px;top:8px;width:15px;height:15px;background:linear-gradient(to bottom,#c4b434 0,#9a8a14 35%,#6a5c08 50%,#d4c43c 58%,#c8b832 100%);box-shadow:inset 0 1px 0 #e8dc70,0 1px 0 #4a4008"></div></div>
<div class="r" style="left:1418px;top:325px;width:30px;height:30px;background:#4f4f4f"><div class="r" style="left:7px;top:8px;width:15px;height:15px;background:linear-gradient(to bottom,#f00 0,#d80000 28%,#5a0000 50%,#e40000 68%,#ff2a2a 100%);box-shadow:inset 0 1px 0 #ffd0d0,0 1px 0 #500"></div></div>
<div class="r" style="left:1450px;top:325px;width:30px;height:30px;background:#4f4f4f"><div class="r" style="left:7px;top:8px;width:15px;height:15px;background:linear-gradient(to bottom,#1a6a38 0,#0f5229 44%,#2e8a50 49%,#0c3c1e 55%,#0a3018 100%);"></div></div>
<div class="r" style="left:1130px;top:357px;width:30px;height:30px;background:#484848"><div class="r" style="left:6px;top:7px;width:17px;height:17px;background:#fff;border:1px solid #000"></div><svg style="left:0;top:0" width="30" height="30" viewBox="0 0 30 30"><path d="M4.8 5.2L24.9 25.7" stroke="#dc0000" stroke-width="1.7"/></svg></div>
<div class="r" style="left:1162px;top:357px;width:30px;height:30px;background:#4f4f4f"><div class="r" style="left:7px;top:8px;width:15px;height:15px;background:linear-gradient(#2c2c2c 0,#8a8a8a 18%,#cacaca 45%,#6e6e6e 55%,#949494 100%);box-shadow:0 1px 0 #333"></div></div>
<div class="r" style="left:1194px;top:357px;width:30px;height:30px;background:#4f4f4f"><div class="r" style="left:7px;top:8px;width:15px;height:15px;background:linear-gradient(#aaa 0,#e2e2e2 35%,#8a8a8a 70%,#646464 100%);box-shadow:0 1px 0 #444"></div></div>
<div class="r" style="left:1226px;top:357px;width:30px;height:30px;background:#4f4f4f"><div class="r" style="left:7px;top:8px;width:15px;height:15px;background:linear-gradient(#949494 0,#d2d2d2 30%,#a8a8a8 60%,#868686 100%);"></div></div>
<div class="r" style="left:1258px;top:357px;width:30px;height:30px;background:#4f4f4f"><div class="r" style="left:7px;top:8px;width:15px;height:15px;background:radial-gradient(circle,#c84c1c 0,#b03412 50%,#7a1408 100%);box-shadow:inset 0 1px 0 #e03020,0 1px 0 #c89030"></div></div>
<div class="r" style="left:1290px;top:357px;width:30px;height:30px;background:#4f4f4f"><div class="r" style="left:7px;top:8px;width:15px;height:15px;background:linear-gradient(#0a8c8c 0,#5ef4f4 22%,#16a0a0 45%,#066 58%,#28a8a8 100%);box-shadow:0 1px 0 #aaa"></div></div>
<div class="r" style="left:1322px;top:357px;width:30px;height:30px;background:#4f4f4f"><div class="r" style="left:7px;top:8px;width:15px;height:15px;background:radial-gradient(circle,#e41010 0,#c00808 60%,#8a0404 100%);"></div></div>
<div class="r" style="left:1354px;top:357px;width:30px;height:30px;background:#4f4f4f"><div class="r" style="left:7px;top:8px;width:15px;height:15px;background:linear-gradient(135deg,#e8f4f4,#c4e8ec 50%,#d8f0f0);"></div></div>
<div class="r" style="left:1386px;top:357px;width:30px;height:30px;background:#4f4f4f"><div class="r" style="left:7px;top:8px;width:15px;height:15px;background:linear-gradient(to right,#d4261a 0,#fa3a2a 50%,#d4261a 100%);box-shadow:0 1px 0 #7a1008"></div></div>
<div class="r" style="left:1418px;top:357px;width:30px;height:30px;background:#4f4f4f"><div class="r" style="left:7px;top:8px;width:15px;height:15px;background:radial-gradient(circle,#d4f424 0,#a4dc14 55%,#78b80c 100%);box-shadow:0 1px 0 #4a7808"></div></div>
<div class="r" style="left:1450px;top:357px;width:30px;height:30px;background:#4f4f4f"><div class="r" style="left:7px;top:8px;width:15px;height:15px;background:repeating-linear-gradient(135deg,#e82020 0 2.3px,#fff 2.3px 4.6px);"></div></div>
<div class="r" style="left:1130px;top:389px;width:30px;height:30px;background:#4f4f4f"><div class="r" style="left:7px;top:8px;width:15px;height:15px;background:linear-gradient(#ffff54 0,#ffff54 88%,#d8cc40 100%);"></div></div>
<div class="r" style="left:1162px;top:389px;width:30px;height:30px;background:#4f4f4f"><div class="r" style="left:7px;top:8px;width:15px;height:15px;background:radial-gradient(circle,#d48c34 0,#8c6c28 32%,#b46c22 58%,#8a4810 80%,#7a3808 100%);border-radius:2px"></div></div>
<div class="r" style="left:1194px;top:389px;width:30px;height:30px;background:#4f4f4f"><div class="r" style="left:7px;top:8px;width:15px;height:15px;background:repeating-linear-gradient(105deg,#d89020 0 2.4px,#74b420 2.4px 4.8px);box-shadow:inset 0 0 0 1px #c4c828"></div></div>
<div class="r" style="left:1226px;top:389px;width:30px;height:30px;background:#4f4f4f"><div class="r" style="left:7px;top:8px;width:15px;height:15px;background:radial-gradient(circle at 60% 60%,#8c4a10 0,#6c3008 70%,#5a2404 100%);border-radius:1px"></div></div>
<div class="r" style="left:1258px;top:389px;width:30px;height:30px;background:#4f4f4f"><div class="r" style="left:7px;top:8px;width:15px;height:15px;background:linear-gradient(#a8e020 0,#88c410 55%,#72aa08 100%);box-shadow:inset 0 0 0 1px #b4ec30"></div></div>
<div class="r" style="left:1290px;top:389px;width:30px;height:30px;background:#4f4f4f"><div class="r" style="left:7px;top:8px;width:15px;height:15px;background:linear-gradient(to bottom,#c40008 0,#e62424 30%,#a2000e 58%,#cc1222 100%);box-shadow:1px 1px 0 #c8c8c8"></div></div>
<div class="r" style="left:1322px;top:389px;width:30px;height:30px;background:#4f4f4f"><div class="r" style="left:7px;top:8px;width:15px;height:15px;background:linear-gradient(135deg,#30c020 0,#2aac1a 45%,#44d434 52%,#22a012 100%);box-shadow:inset 0 0 0 1px #b8a428"></div></div>
<div class="r" style="left:1354px;top:389px;width:30px;height:30px;background:#4f4f4f"><div class="r" style="left:7px;top:8px;width:15px;height:15px;background:linear-gradient(to bottom,#000 0 50%,#fff 50% 59%,#e468c4 59% 65%,#a0107e 65% 71%,#fff 71% 90%,#300030 90% 100%);"></div></div>
<div class="r" style="left:1386px;top:389px;width:30px;height:30px;background:#4f4f4f"><div class="r" style="left:7px;top:8px;width:15px;height:15px;background:#fff;border-radius:3px;box-shadow:inset 0 0 0 1px #b4b4b4,inset 0 0 2px 1px #ddd"></div></div>
<div class="r" style="left:1418px;top:389px;width:30px;height:30px;background:#4f4f4f"><div class="r" style="left:7px;top:8px;width:15px;height:15px;background:linear-gradient(to bottom,#5a0e06 0,#e44422 10%,#fff 20%,#fff 44%,#ffe468 54%,#f60000 70%,#7e0000 88%,#200 100%);"></div></div>
<div class="r" style="left:1450px;top:389px;width:30px;height:30px;background:#4f4f4f"><div class="r" style="left:7px;top:8px;width:15px;height:15px;background:linear-gradient(to bottom,#6a6a72 0,#fff 16%,#fff 70%,#d8d0a4 85%,#5a5430 100%);"></div></div>
<div class="r" style="left:1130px;top:421px;width:30px;height:30px;background:#4f4f4f"><div class="r" style="left:7px;top:8px;width:15px;height:15px;background:radial-gradient(ellipse,#fff 38%,#f8b0f8 55%,#b050b0 75%,#3c1444 100%);border-radius:1px;box-shadow:inset 0 0 0 1px #3c1444"></div></div>
<div class="r" style="left:1162px;top:421px;width:30px;height:30px;background:#484848"><div class="r" style="left:6px;top:7px;width:17px;height:17px;background:#fff;border:1px solid #000"></div><svg style="left:0;top:0" width="30" height="30" viewBox="0 0 30 30"><path d="M4.8 5.2L24.9 25.7" stroke="#dc0000" stroke-width="1.7"/></svg></div>
<div class="r" style="left:1194px;top:421px;width:30px;height:30px;background:#4f4f4f"><div class="r" style="left:7px;top:8px;width:15px;height:15px;background:linear-gradient(#8a8a8a 0,#dedede 14%,#9a9a9a 30%,#e2e2e2 48%,#868686 60%,#cecece 80%,#747474 100%);border-radius:2px"></div></div>
<div class="r" style="left:1226px;top:421px;width:30px;height:30px;background:#4f4f4f"><div class="r" style="left:7px;top:8px;width:15px;height:15px;background:linear-gradient(#6a6a6a 0,#dcdcdc 18%,#343434 40%,#b8b8b8 56%,#9a9a9a 100%);border-radius:1px;box-shadow:0 1px 0 #333"></div></div>
<div class="r" style="left:1258px;top:421px;width:30px;height:30px;background:#4f4f4f"><div class="r" style="left:7px;top:8px;width:15px;height:15px;background:linear-gradient(#c8c8c8 0,#eee 40%,#565656 56%,#fff 66%,#9a9a9a 85%,#303030 100%);"></div></div>
<div class="r" style="left:1290px;top:421px;width:30px;height:30px;background:#4f4f4f"><div class="r" style="left:7px;top:8px;width:15px;height:15px;background:linear-gradient(to right,#667078 0,#8a949c 24%,#2a3238 34%,#2a3238 60%,#7c868e 70%,#566068 100%);border-radius:2px;box-shadow:0 1px 0 #222"></div></div>
<div class="r" style="left:1322px;top:421px;width:30px;height:30px;background:#4f4f4f"><div class="r" style="left:7px;top:8px;width:15px;height:15px;background:linear-gradient(#f8c4ac 0,#e89272 15%,#fff0e8 30%,#f0aa8a 45%,#fce2d2 55%,#e88a6a 70%,#f8cab2 85%,#d07252 100%);"></div></div>
<div class="r" style="left:1354px;top:421px;width:30px;height:30px;background:#4f4f4f"><div class="r" style="left:7px;top:8px;width:15px;height:15px;background:#33201a;border-radius:3px;box-shadow:0 1px 0 #222"></div></div>
<div class="r" style="left:1386px;top:421px;width:30px;height:30px;background:#4f4f4f"><div class="r" style="left:7px;top:8px;width:15px;height:15px;background:linear-gradient(#565868 0,#dcdeea 20%,#888a98 45%,#ccced8 60%,#787a88 80%,#464856 100%);border-radius:1px;box-shadow:0 1px 0 #222"></div></div>
<div class="r" style="left:1418px;top:421px;width:30px;height:30px;background:#4f4f4f"><div class="r" style="left:7px;top:8px;width:15px;height:15px;background:linear-gradient(#000 0 18%,#fff 32%,#e8f0ff 58%,#22324a 80%,#101828 100%);"></div></div>
<div class="r" style="left:1450px;top:421px;width:30px;height:30px;background:#4f4f4f"><div class="r" style="left:7px;top:8px;width:15px;height:15px;background:linear-gradient(#e8c840 0,#a88a20 25%,#f0da64 50%,#c8aa32 75%,#a08218 100%);box-shadow:0 1px 0 #4a3a08"></div></div>
<div class="r" style="left:1483px;top:261px;width:16px;height:191px;background:#4a4a4a;"></div>
<div class="r" style="left:1485px;top:278px;width:12px;height:78px;background:#696969"></div>
<svg style="left:1488px;top:268px" width="8" height="6" viewBox="0 0 8 6"><path d="M0.6 5L4 1.4L7.4 5" stroke="#8c8c8c" stroke-width="1.1" fill="none"/></svg>
<svg style="left:1488px;top:440px" width="8" height="6" viewBox="0 0 8 6"><path d="M0.6 1L4 4.6L7.4 1" stroke="#8c8c8c" stroke-width="1.1" fill="none"/></svg>
<div class="r" style="left:1129px;top:452px;width:370px;height:1px;background:#3e3e3e;"></div>
<div class="r" style="left:1129px;top:477px;width:370px;height:1px;background:#3a3a3a;"></div>
<div class="r" style="left:1129px;top:478px;width:370px;height:1px;background:#4a4a4a;"></div>
<div class="r" style="left:1129px;top:479px;width:370px;height:1px;background:#3a3a3a;"></div>
<svg style="left:1402px;top:458px" width="13" height="13" viewBox="0 0 13 13"><circle cx="6.5" cy="6.5" r="5" fill="none" stroke="#8c8c8c" stroke-width="1.3"/><path d="M3 3L10 10" stroke="#8c8c8c" stroke-width="1.3"/></svg>
<svg style="left:1431px;top:459px" width="12" height="12" viewBox="0 0 12 12"><path d="M1.4 1.4H10.4V10.4H4.8L1.4 7Z" fill="none" stroke="#8c8c8c" stroke-width="1.1"/><path d="M1.4 7H4.8V10.4" fill="none" stroke="#8c8c8c" stroke-width="1.1"/></svg>
<svg style="left:1460px;top:459px" width="12" height="13" viewBox="0 0 12 13"><path d="M0.6 2.6H11.4M4 2.4V0.8H8V2.4" fill="none" stroke="#8c8c8c" stroke-width="1.1"/><path d="M1.6 3.4L2 12H10L10.4 3.4" fill="none" stroke="#8c8c8c" stroke-width="1.1"/><path d="M4.2 4.6V10.6M6 4.6V10.6M7.8 4.6V10.6" stroke="#8c8c8c" stroke-width="1"/></svg>

<!-- LAYERSPANEL -->
<div class="r" style="left:1129px;top:480px;width:370px;height:27px;background:#424242;"></div>
<div class="r" style="left:1129px;top:507px;width:370px;height:1px;background:#3a3a3a;"></div>
<div class="r" style="left:1129px;top:480px;width:48px;height:28px;background:#535353;"></div>
<div class="r" style="left:1177px;top:480px;width:1px;height:27px;background:#3a3a3a;"></div>
<div class="r" style="left:1239px;top:480px;width:1px;height:27px;background:#383838;"></div>
<div class="r" style="left:1285px;top:480px;width:1px;height:27px;background:#383838;"></div>
<span class="t" style="left:1138.40px;top:489px;font-size:9.9px;line-height:9.9px;color:#f2f2f2;font-weight:bold;transform:scaleX(0.8750);transform-origin:0 0;">Layers</span>
<span class="t" style="left:1186.20px;top:489px;font-size:9.9px;line-height:9.9px;color:#b4b4b4;font-weight:bold;transform:scaleX(0.9318);transform-origin:0 0;">Channels</span>
<span class="t" style="left:1248.30px;top:489px;font-size:9.9px;line-height:9.9px;color:#b4b4b4;font-weight:bold;transform:scaleX(0.9259);transform-origin:0 0;">Paths</span>
<div class="r" style="left:1483px;top:490px;width:10px;height:1px;background:#c8c8c8;"></div>
<div class="r" style="left:1483px;top:492px;width:10px;height:1px;background:#c8c8c8;"></div>
<div class="r" style="left:1483px;top:494px;width:10px;height:1px;background:#c8c8c8;"></div>
<div class="r" style="left:1483px;top:496px;width:10px;height:1px;background:#c8c8c8;"></div>
<div class="r" style="left:1129px;top:539px;width:370px;height:1px;background:#484848;"></div>
<div class="r" style="left:1129px;top:567px;width:370px;height:1px;background:#484848;"></div>
<div class="r" style="left:1132px;top:516px;width:88px;height:21px;background:#4d4d4d;border:1px solid #5c5c5c;border-radius:3px"></div>
<svg style="left:1140px;top:521px" width="12" height="12" viewBox="0 0 12 12"><circle cx="4.6" cy="4.6" r="3.4" fill="none" stroke="#c4c4c4" stroke-width="1.3"/><path d="M7.2 7.2L10.8 10.8" stroke="#c4c4c4" stroke-width="1.7"/></svg>
<span class="t" style="left:1154.37px;top:521px;font-size:10.6px;line-height:10.6px;color:#8c8c8c;transform:scaleX(0.9300);transform-origin:0 0;">Kind</span>
<svg style="left:1208px;top:525px" width="8" height="5" viewBox="0 0 8 5"><path d="M0.5 0.5L4 4L7.5 0.5" stroke="#727272" stroke-width="1" fill="none"/></svg>
<svg style="left:1230px;top:521px" width="14" height="11" viewBox="0 0 14 11"><rect x="0.6" y="0.6" width="12.4" height="9.4" fill="none" stroke="#d6d6d6" stroke-width="1.1"/><path d="M2.4 8.2L5 4.6L7 7L8.6 5.4L11.2 8.2Z" fill="#d6d6d6"/></svg>
<svg style="left:1255px;top:521px" width="12" height="12" viewBox="0 0 12 12"><circle cx="6" cy="6" r="5" fill="none" stroke="#d6d6d6" stroke-width="1.1"/><path d="M2.5 9.5A5 5 0 0 1 9.5 2.5Z" fill="#d6d6d6"/></svg>
<span class="t" style="left:1280.6px;top:518px;font-family:'Liberation Serif',serif;font-weight:bold;font-size:14.5px;line-height:16px;color:#d6d6d6">T</span>
<svg style="left:1303px;top:520px" width="13" height="13" viewBox="0 0 13 13"><rect x="2.2" y="2.2" width="8.6" height="8.6" fill="none" stroke="#d6d6d6" stroke-width="1.1"/><rect x="0.9" y="0.9" width="2.6" height="2.6" fill="#d6d6d6"/><rect x="9.5" y="0.9" width="2.6" height="2.6" fill="#d6d6d6"/><rect x="0.9" y="9.5" width="2.6" height="2.6" fill="#d6d6d6"/><rect x="9.5" y="9.5" width="2.6" height="2.6" fill="#d6d6d6"/></svg>
<svg style="left:1328px;top:520px" width="12" height="13" viewBox="0 0 12 13"><path d="M3.4 5V0.8H8L11 3.8V11H7" fill="none" stroke="#d6d6d6" stroke-width="1.1"/><path d="M7.8 0.8V4H11" fill="none" stroke="#d6d6d6" stroke-width="1"/><rect x="0.6" y="6" width="6" height="6.2" fill="#d6d6d6"/></svg>
<div class="r" style="left:1352px;top:519px;width:9px;height:16px;border:1px solid #464646;border-radius:4.5px;background:#4e4e4e"></div>
<div class="r" style="left:1352px;top:517px;width:9px;height:9px;border-radius:50%;background:#8e8e8e"></div>
<div class="r" style="left:1132px;top:544px;width:130px;height:21px;background:#4d4d4d;border:1px solid #5c5c5c;border-radius:3px"></div>
<span class="t" style="left:1140.05px;top:549px;font-size:10.6px;line-height:10.6px;color:#8c8c8c;transform:scaleX(0.9515);transform-origin:0 0;">Normal</span>
<svg style="left:1250.5px;top:553px" width="8" height="5" viewBox="0 0 8 5"><path d="M0.5 0.5L4 4L7.5 0.5" stroke="#727272" stroke-width="1" fill="none"/></svg>
<span class="t" style="left:1268.00px;top:549px;font-size:10.6px;line-height:10.6px;color:#a0a0a0;transform:scaleX(0.9474);transform-origin:0 0;">Opacity:</span>
<div class="r" style="left:1308px;top:545.5px;width:52px;height:17px;background:#4e4e4e;border:1px solid #626262;border-radius:2px"></div>
<div class="r" style="left:1344px;top:546px;width:1px;height:16px;background:#626262;"></div>
<span class="t" style="left:1313.26px;top:549px;font-size:10.6px;line-height:10.6px;color:#7c7c7c;transform:scaleX(0.9385);transform-origin:0 0;">100%</span>
<svg style="left:1348.5px;top:552px" width="8" height="5" viewBox="0 0 8 5"><path d="M0.5 0.5L4 4L7.5 0.5" stroke="#727272" stroke-width="1" fill="none"/></svg>
<span class="t" style="left:1134.24px;top:577px;font-size:10.6px;line-height:10.6px;color:#a0a0a0;transform:scaleX(0.9583);transform-origin:0 0;">Lock:</span>
<svg style="left:1167px;top:576px" width="12" height="12" viewBox="0 0 12 12"><rect x="0.5" y="0.5" width="11" height="11" fill="none" stroke="#d6d6d6" stroke-width="1"/><path d="M1 1H4.3V4.3H1ZM7.7 1H11V4.3H7.7ZM4.3 4.3H7.7V7.7H4.3ZM1 7.7H4.3V11H1ZM7.7 7.7H11V11H7.7Z" fill="#d6d6d6"/></svg>
<svg style="left:1188px;top:575px" width="15" height="14" viewBox="0 0 15 14"><path d="M14 0.6C14.4 2.2 11.8 6.4 9.4 9.6L7 7.8C9.2 4.6 12 1.4 14 0.6Z M6.2 8.6L8.6 10.4C8.2 12.8 4.6 13.6 1 13C3.2 11.8 3.6 9 6.2 8.6Z" fill="#d6d6d6"/></svg>
<svg style="left:1210px;top:575px" width="14" height="14" viewBox="0 0 14 14"><path d="M7 1.4V12.6M1.4 7H12.6" stroke="#d6d6d6" stroke-width="1.2" fill="none"/><path d="M7 0.2L9.2 3H4.8ZM7 13.8L9.2 11H4.8ZM0.2 7L3 4.8V9.2ZM13.8 7L11 4.8V9.2Z" fill="#d6d6d6"/></svg>
<svg style="left:1232px;top:575px" width="16" height="15" viewBox="0 0 16 15"><path d="M0.6 4.2H12.4V14.4M3.6 1V11.6H15.4" fill="none" stroke="#d6d6d6" stroke-width="1.2"/><path d="M9 1.6H11M13.4 2.2L14.6 1M13.6 5V7" stroke="#d6d6d6" stroke-width="1"/></svg>
<svg style="left:1257px;top:575px" width="11" height="13" viewBox="0 0 11 13"><path d="M2.8 5.6V3.6A2.7 2.7 0 0 1 8.2 3.6V5.6" fill="none" stroke="#d6d6d6" stroke-width="1.3"/><rect x="0.6" y="5.4" width="9.8" height="6.8" rx="0.6" fill="#d6d6d6"/><rect x="4.7" y="7.6" width="1.6" height="2.4" fill="#535353"/></svg>
<span class="t" style="left:1289.28px;top:577px;font-size:10.6px;line-height:10.6px;color:#a0a0a0;transform:scaleX(0.9200);transform-origin:0 0;">Fill:</span>
<div class="r" style="left:1308px;top:573.5px;width:52px;height:17px;background:#4e4e4e;border:1px solid #626262;border-radius:2px"></div>
<div class="r" style="left:1344px;top:574px;width:1px;height:16px;background:#626262;"></div>
<span class="t" style="left:1313.26px;top:577px;font-size:10.6px;line-height:10.6px;color:#7c7c7c;transform:scaleX(0.9385);transform-origin:0 0;">100%</span>
<svg style="left:1348.5px;top:580px" width="8" height="5" viewBox="0 0 8 5"><path d="M0.5 0.5L4 4L7.5 0.5" stroke="#727272" stroke-width="1" fill="none"/></svg>
<div class="r" style="left:1129px;top:598px;width:354px;height:199px;background:#4d4d4d;"></div>
<div class="r" style="left:1483px;top:598px;width:16px;height:199px;background:#515151;"></div>
<div class="r" style="left:1129px;top:598px;width:30px;height:21px;background:#535353;"></div>
<div class="r" style="left:1159px;top:598px;width:324px;height:21px;background:#6c6c6c;"></div>
<div class="r" style="left:1129px;top:619px;width:354px;height:1px;background:#484848;"></div>
<div class="r" style="left:1158px;top:598px;width:1px;height:21px;background:#484848;"></div>
<svg style="left:1137px;top:604px" width="15" height="11" viewBox="0 0 15 11"><path d="M0.6 5.5C3 1.6 5.4 0.6 7.5 0.6C9.6 0.6 12 1.6 14.4 5.5C12 9.4 9.6 10.4 7.5 10.4C5.4 10.4 3 9.4 0.6 5.5Z" fill="#ececec"/><circle cx="7.5" cy="5.3" r="2.8" fill="#3a3a3a"/><circle cx="8.4" cy="4.4" r="0.8" fill="#d8d8d8"/></svg>
<div class="r" style="left:1163px;top:605px;width:32px;height:7px;background:linear-gradient(#2a87d0,#8fc0e6 50%,#fff);border:1px solid #1a1a1a"></div>
<div class="r" style="left:1166px;top:607.6px;width:26px;height:1.4px;background:repeating-linear-gradient(to right,#6a4a80 0 2px,#5a78b0 2px 3px);opacity:.8"></div>
<span class="t" style="left:1205.20px;top:604px;font-size:10.8px;line-height:10.8px;color:#f0f0f0;font-style:italic;transform:scaleX(0.9207);transform-origin:0 0;">Background</span>
<svg style="left:1456.5px;top:603px" width="11" height="13" viewBox="0 0 11 13"><path d="M2.8 5.6V3.6A2.7 2.7 0 0 1 8.2 3.6V5.6" fill="none" stroke="#e4e4e4" stroke-width="1.3"/><rect x="1" y="5.8" width="9" height="6" fill="none" stroke="#e4e4e4" stroke-width="1.2"/><rect x="4.6" y="7.8" width="1.8" height="2" fill="#e4e4e4"/></svg>
<div class="r" style="left:1129px;top:797px;width:370px;height:1px;background:#3e3e3e;"></div>
<svg style="left:1296px;top:804px" width="16" height="9" viewBox="0 0 16 9"><path d="M6.6 1H4.2A3.4 3.4 0 0 0 4.2 7.8H6.6M9.4 1H11.8A3.4 3.4 0 0 1 11.8 7.8H9.4M4.6 4.4H11.4" fill="none" stroke="#8c8c8c" stroke-width="1.3"/></svg>
<span class="t" style="left:1325.60px;top:800px;font-size:14.5px;line-height:14.5px;color:#8c8c8c;font-style:italic;transform:scaleX(0.9500);transform-origin:0 0;">fx</span>
<svg style="left:1335px;top:814px" width="4" height="3" viewBox="0 0 4 3"><path d="M0 0H4L2 2.4Z" fill="#6a6a6a"/></svg>
<svg style="left:1350px;top:803px" width="14" height="10" viewBox="0 0 14 10"><rect x="0.4" y="0.2" width="13.2" height="9.6" fill="#d6d6d6"/><circle cx="7" cy="5" r="2.7" fill="#535353"/></svg>
<svg style="left:1379px;top:802px" width="14" height="16" viewBox="0 0 14 16"><circle cx="6.2" cy="6.5" r="5" fill="none" stroke="#d6d6d6" stroke-width="1.1"/><path d="M2.7 10A5 5 0 0 1 9.7 3Z" fill="#d6d6d6"/><path d="M10.4 13.4H13.6L12 15.4Z" fill="#d6d6d6"/></svg>
<svg style="left:1405px;top:802px" width="14" height="12" viewBox="0 0 14 12"><path d="M0.8 1H5.6V2.2H0.8Z" fill="#d6d6d6"/><rect x="0.8" y="2.8" width="12.2" height="8.2" fill="#d6d6d6"/></svg>
<svg style="left:1433px;top:803px" width="12" height="12" viewBox="0 0 12 12"><path d="M1.2 1.2H10.4V10.4H4.6L1.2 7Z" fill="none" stroke="#d6d6d6" stroke-width="1.2"/><path d="M1.2 7H4.6V10.4" fill="none" stroke="#d6d6d6" stroke-width="1.2"/></svg>
<svg style="left:1460px;top:802px" width="12" height="13" viewBox="0 0 12 13"><path d="M0.6 2.6H11.4M4 2.4V0.8H8V2.4" fill="none" stroke="#8c8c8c" stroke-width="1.1"/><path d="M1.6 3.4L2 12H10L10.4 3.4" fill="none" stroke="#8c8c8c" stroke-width="1.1"/><path d="M4.2 4.6V10.6M6 4.6V10.6M7.8 4.6V10.6" stroke="#8c8c8c" stroke-width="1"/></svg>

</body>
</html>
